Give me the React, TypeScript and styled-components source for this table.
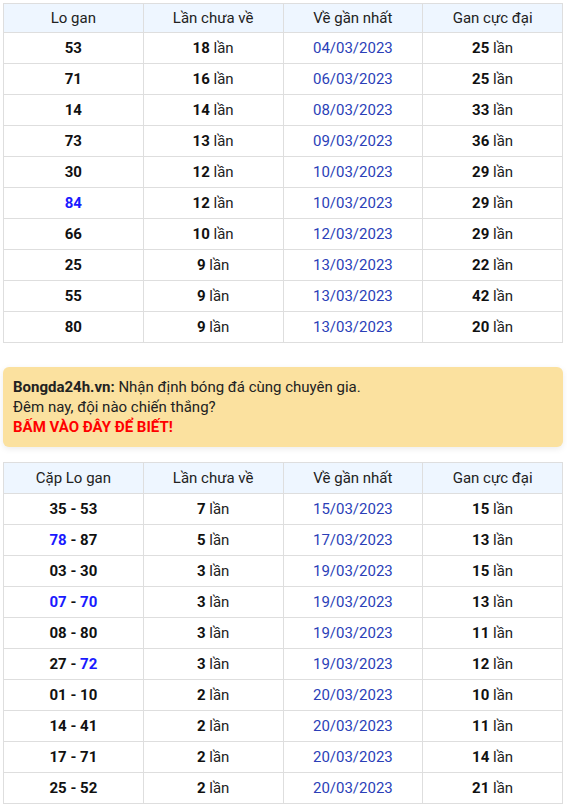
import React from "react";
import styled, { createGlobalStyle } from "styled-components";

const Global = createGlobalStyle`
  html, body { margin: 0; padding: 0; background: #fff; }
  body { font-family: Roboto, "Noto Sans", Arial, sans-serif; color: #222; }
`;

const Page = styled.div`
  padding: 3px 4px 3px 3px;
  display: flex;
  flex-direction: column;
`;

const Table = styled.table`
  width: 560px;
  border-collapse: collapse;
  table-layout: fixed;
  font-size: 15px;
`;

const Th = styled.th<{ $h: number }>`
  height: ${(p) => p.$h}px;
  padding: 0;
  border: 1px solid #dedede;
  background: #eef6ff;
  font-weight: 400;
  color: #222;
  text-align: center;
`;

const Td = styled.td`
  height: 30px;
  padding: 0;
  border: 1px solid #dedede;
  text-align: center;
  color: #222;
`;

const B = styled.b<{ $blue?: boolean }>`
  font-weight: 700;
  color: ${(p) => (p.$blue ? "#1a1aff" : "#111")};
`;

const DateTd = styled(Td)`
  color: #2b3fb8;
`;

const Banner = styled.div`
  margin: 24px 0 15px;
  width: 560px;
  box-sizing: border-box;
  padding: 10px 10px 10px;
  background: #fbe19f;
  border-radius: 6px;
  box-shadow: 0 2px 6px rgba(0, 0, 0, 0.08);
  font-size: 15px;
  line-height: 20px;
  color: #222;
`;

const Red = styled.div`
  color: #f00;
  font-weight: 700;
`;

type Row = [React.ReactNode, number, string, number];

const t1: Row[] = [
  [<B>53</B>, 18, "04/03/2023", 25],
  [<B>71</B>, 16, "06/03/2023", 25],
  [<B>14</B>, 14, "08/03/2023", 33],
  [<B>73</B>, 13, "09/03/2023", 36],
  [<B>30</B>, 12, "10/03/2023", 29],
  [<B $blue>84</B>, 12, "10/03/2023", 29],
  [<B>66</B>, 10, "12/03/2023", 29],
  [<B>25</B>, 9, "13/03/2023", 22],
  [<B>55</B>, 9, "13/03/2023", 42],
  [<B>80</B>, 9, "13/03/2023", 20],
];

const pair = (a: string, b: string, ba?: boolean, bb?: boolean) => (
  <>
    <B $blue={ba}>{a}</B>
    <B> - </B>
    <B $blue={bb}>{b}</B>
  </>
);

const t2: Row[] = [
  [pair("35", "53"), 7, "15/03/2023", 15],
  [pair("78", "87", true), 5, "17/03/2023", 13],
  [pair("03", "30"), 3, "19/03/2023", 15],
  [pair("07", "70", true, true), 3, "19/03/2023", 13],
  [pair("08", "80"), 3, "19/03/2023", 11],
  [pair("27", "72", false, true), 3, "19/03/2023", 12],
  [pair("01", "10"), 2, "20/03/2023", 10],
  [pair("14", "41"), 2, "20/03/2023", 11],
  [pair("17", "71"), 2, "20/03/2023", 14],
  [pair("25", "52"), 2, "20/03/2023", 21],
];

const GanTable = ({ first, rows, headH }: { first: string; rows: Row[]; headH: number }) => (
  <Table>
    <thead>
      <tr>
        <Th $h={headH}>{first}</Th>
        <Th $h={headH}>Lần chưa về</Th>
        <Th $h={headH}>Về gần nhất</Th>
        <Th $h={headH}>Gan cực đại</Th>
      </tr>
    </thead>
    <tbody>
      {rows.map((r, i) => (
        <tr key={i}>
          <Td>{r[0]}</Td>
          <Td>
            <B>{r[1]}</B> lần
          </Td>
          <DateTd>{r[2]}</DateTd>
          <Td>
            <B>{r[3]}</B> lần
          </Td>
        </tr>
      ))}
    </tbody>
  </Table>
);

export default function App() {
  return (
    <Page>
      <Global />
      <GanTable first="Lo gan" rows={t1} headH={28} />
      <Banner>
        <div>
          <b>Bongda24h.vn:</b> Nhận định bóng đá cùng chuyên gia.
        </div>
        <div>Đêm nay, đội nào chiến thắng?</div>
        <Red>BẤM VÀO ĐÂY ĐỂ BIẾT!</Red>
      </Banner>
      <GanTable first="Cặp Lo gan" rows={t2} headH={30} />
    </Page>
  );
}
